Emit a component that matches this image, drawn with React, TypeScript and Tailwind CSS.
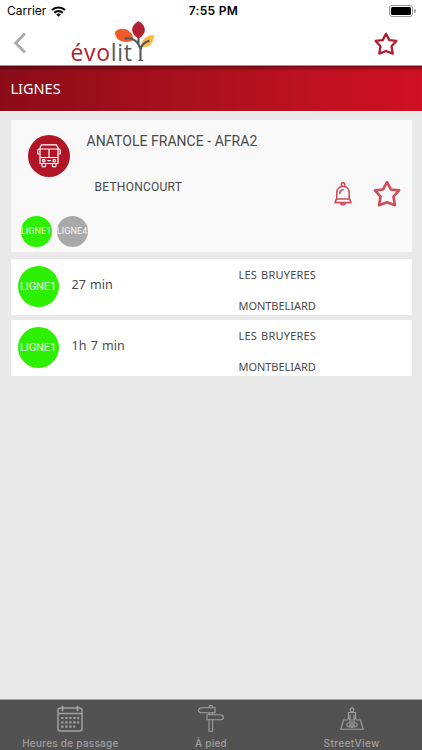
import clsx from "clsx";

const departures = [
  { line: "LIGNE1", wait: "27 min", from: "LES BRUYERES", to: "MONTBELIARD" },
  { line: "LIGNE1", wait: "1h 7 min", from: "LES BRUYERES", to: "MONTBELIARD" },
];

function StarIcon({ className }: { className?: string }) {
  return (
    <svg viewBox="0 0 26 26" fill="none" stroke="currentColor" strokeWidth="2.5" strokeLinejoin="round" className={className}>
      <path d="M13 2 16.6 8.8 24.2 9.7 19 15.4 20.3 23.4 13 20.6 5.7 23.4 7 15.4 1.8 9.7 9.4 8.8Z" />
    </svg>
  );
}

function BackIcon() {
  return (
    <svg viewBox="0 0 14 22" fill="none" stroke="#aaaaaa" strokeWidth="2.8" className="w-[14px] h-[22px]">
      <path d="M12 1.5 2.6 11 12 20.5" />
    </svg>
  );
}

function BellIcon() {
  return (
    <svg viewBox="0 0 18 24" fill="none" stroke="currentColor" strokeWidth="1.6" strokeLinejoin="round" strokeLinecap="round" className="w-[18px] h-6">
      <path d="M7.4 4.4V2.3a1.6 1.6 0 0 1 3.2 0v2.1" />
      <path d="M2.8 17V10.4a6.2 6.2 0 0 1 12.4 0V17" />
      <path d="M2.4 17h13.2l1.4 3.6H1Z" />
      <path d="M6.8 21a2.2 2 0 0 0 4.4 0Z" />
      <path d="M5.8 11.4a3.4 3.4 0 0 1 3.4-3.6" />
    </svg>
  );
}

function BusIcon() {
  return (
    <svg viewBox="0 0 24 24" fill="none" stroke="white" strokeWidth="1.2" strokeLinejoin="round" strokeLinecap="round" className="size-6">
      <path d="M4.5 .8h15L21 3.8v15.7H3V3.8Z" />
      <path d="M3 5h18M3 13.5h18M12 5v8.5" />
      <path d="M3 5H2a1.2 1.2 0 0 0-1.2 1.2V10H2M21 5h1a1.2 1.2 0 0 1 1.2 1.2V10H22" />
      <circle cx="6.8" cy="16.6" r="1.3" />
      <circle cx="17.2" cy="16.6" r="1.3" />
      <path d="M10.5 16.6h3M5 19.5v2.2a1.2 1.2 0 0 0 1.2 1.2h1.2a1.2 1.2 0 0 0 1.2-1.2v-2.2M15.4 19.5v2.2a1.2 1.2 0 0 0 1.2 1.2h1.2a1.2 1.2 0 0 0 1.2-1.2v-2.2" />
    </svg>
  );
}

function CalendarIcon() {
  return (
    <svg viewBox="0 0 26 27" fill="none" stroke="currentColor" strokeWidth="1.5" className="w-[26px] h-[27px]">
      <rect x="1" y="3" width="24" height="23" rx="2.5" />
      <path d="M1 8.5h24" />
      <path d="M5.5 .8v5.5M20.5 .8v5.5" strokeWidth="1.8" />
      <path d="M4.2 13h18M4.2 17.3h18M4.2 21.6h14" strokeWidth="2.2" strokeDasharray="2.3 1.7" />
    </svg>
  );
}

function SignpostIcon() {
  return (
    <svg viewBox="0 0 28 27" fill="none" stroke="currentColor" strokeWidth="1.1" strokeLinejoin="round" className="w-7 h-[27px]">
      <path d="M12 2.8V2.2a1.8 1.8 0 0 1 3.6 0v.6" />
      <path d="M4.5 2.8H18v5H4.5C3 7.8 1.8 6.500 1.5 5.3 1.8 4 3 2.8 4.5 2.8Z" />
      <path d="M10 9.8h13.5c1.5 0 2.7 1.2 3 2.5-.3 1.3-1.5 2.5-3 2.5H10Z" />
      <path d="M12 7.8v2M15.6 7.8v2M12 14.8v11.4h3.6V14.8" />
    </svg>
  );
}

function StreetViewIcon() {
  return (
    <svg viewBox="0 0 24 24" fill="none" stroke="currentColor" strokeWidth="1.1" strokeLinejoin="round" className="size-6">
      <path d="M8 13H3.5L.8 22.3h22.4L20.5 13H16" />
      <circle cx="12" cy="2.8" r="1.9" />
      <path d="M8.5 5.5h7v6.5H14v7h-4v-7H8.5ZM10 7.5V12M14 7.5V12M12 12v6.5" />
      <path d="M9.5 15.5c-1.8.4-2.7 1.1-2.7 2 0 1.6 2.3 2.7 5.2 2.7s5.2-1.1 5.2-2.7c0-.9-.9-1.6-2.7-2" />
    </svg>
  );
}

function Logo() {
  return (
    <div className="relative w-[84px] h-[42px]">
      <div className="absolute left-[-0.5px] top-[17px] font-['Open_Sans'] text-[23px] leading-[28px] tracking-[0.7px] font-medium text-[#b51f33]">
        évo<span className="text-[#58595b]">lit</span>
      </div>
      <svg viewBox="0 0 84 42" fill="none" className="absolute inset-0 w-[84px] h-[42px]">
        <path d="M44 11C47 7 54 7 58 10c3 2 4 5 4.500 9-3 2-7 2.500-11 1.500C46 19 44 15 44 11Z" fill="#f15a29" />
        <path d="M67.500 0C76 5 76 13 67.500 17.500 59 13 59 5 67.500 0Z" fill="#b51f33" />
        <path d="M83 14C83 22 78 27 70.500 26 70 19 75 14 83 14Z" fill="#fbb940" />
        <path d="M53.500 17.500C61 16 67 20 69.500 28V39.500M69.500 29C70 24 74 21 78.500 19.500M67.500 17V23" stroke="#58595b" strokeWidth="2.1" />
        <path d="M67.500 39.500h4.500" stroke="#58595b" strokeWidth="1.2" />
      </svg>
    </div>
  );
}

function LineBadge({ label, color, small }: { label: string; color: string; small?: boolean }) {
  return (
    <div
      className={clsx(
        "flex shrink-0 items-center justify-center rounded-full font-['Roboto'] text-white/90 whitespace-nowrap",
        small ? "size-[31px] pt-px text-[9px] tracking-[0.1px]" : "size-[41px] pt-px text-[11px] tracking-[-0.1px]",
        color
      )}
    >
      {label}
    </div>
  );
}

export default function App() {
  return (
    <div className="w-full h-[750px] flex flex-col overflow-hidden bg-[#e9e9e9] font-['Roboto',sans-serif] text-[#4a4a4a]">
      {/* status bar */}
      <div className="h-[22px] shrink-0 grid grid-cols-3 items-center bg-white pl-[7px] pr-[6px] font-['Inter'] text-black">
        <div className="flex items-center gap-[5px] text-[12px]">
          Carrier
          <svg viewBox="0 0 16 11" className="w-[15px] h-[11px]" fill="none" stroke="black" strokeWidth="2.2">
            <path d="M1 4a10 10 0 0 1 14 0M3.6 6.9a6.3 6.3 0 0 1 8.8 0" />
            <path d="M8 11 5.6 8.8a3.4 3.4 0 0 1 4.8 0Z" fill="black" stroke="none" />
          </svg>
        </div>
        <div className="pl-[4px] text-center text-[12px] font-semibold tracking-[0.3px]">7:55 PM</div>
        <div className="flex items-center justify-end gap-px">
          <div className="w-6 h-[12px] rounded-[3px] border border-[#999] p-px">
            <div className="h-full rounded-[1.5px] bg-black" />
          </div>
          <div className="w-[1.5px] h-1 rounded-r bg-[#999]" />
        </div>
      </div>

      {/* header */}
      <div className="h-[43px] shrink-0 flex justify-between bg-white">
        <div className="flex">
          <div className="ml-[12.5px] mt-[10px]">
            <BackIcon />
          </div>
          <div className="ml-[44.5px] -mt-[1px]">
            <Logo />
          </div>
        </div>
        <StarIcon className="size-6 mt-[9.5px] mr-6 text-[#b01c30]" />
      </div>

      {/* title */}
      <div className="h-[46px] shrink-0 border-t border-[#c98088] bg-linear-to-r from-[#8b0c18] via-[#ad111e] to-[#d01024]">
        <div className="h-full flex items-center pl-[10.5px] bg-linear-to-b from-black/35 to-transparent to-12% font-['Noto_Sans'] text-[14.5px] text-white">
          LIGNES
        </div>
      </div>

      <div className="flex-1 px-[10.5px] pt-[8px] border-t border-[#f6f0f0]">
        {/* stop */}
        <div className="h-[132px] flex flex-col justify-between bg-[#f9f9f9] pl-[10px] pr-[11px] pb-[5px]">
          <div className="flex">
            <div className="size-[42px] ml-[7px] mt-[15px] flex items-center justify-center rounded-full bg-[#b01425]">
              <BusIcon />
            </div>
            <div className="ml-[17px] pt-[12px]">
              <div className="text-[14px] leading-[18px] tracking-[0.03px]">ANATOLE FRANCE - AFRA2</div>
              <div className="mt-[28px] ml-2 text-[12px] leading-[18px] tracking-[0.25px]">BETHONCOURT</div>
            </div>
            <div className="ml-auto mt-[60px] flex items-center gap-[21px] text-[#cf4e5b]">
              <BellIcon />
              <StarIcon className="size-[28px]" />
            </div>
          </div>
          <div className="flex gap-[5px]">
            <LineBadge label="LIGNE1" color="bg-[#2cf000]" small />
            <LineBadge label="LIGNE4" color="bg-[#a9a9a9]" small />
          </div>
        </div>

        {/* next departures */}
        <div className="mt-[7px] flex flex-col gap-[5px]">
          {departures.map((departure, index) => (
            <div key={index} className="h-[56px] flex bg-white pl-[7px] pt-[7px]">
              <LineBadge label={departure.line} color="bg-[#2cf000]" />
              <div className="w-[180px] pl-[13px] pt-[10px] font-['Noto_Sans'] text-[12.5px] leading-[18px] [word-spacing:1px]">{departure.wait}</div>
              <div className="font-['Noto_Sans'] text-[11px] leading-[18px]">
                <div className="tracking-[0.2px] [word-spacing:1px]">{departure.from}</div>
                <div className="mt-[12.5px] tracking-[-0.05px]">{departure.to}</div>
              </div>
            </div>
          ))}
        </div>
      </div>

      {/* tab bar */}
      <div className="h-[51px] shrink-0 grid grid-cols-3 border-t border-[#a0a0a0] bg-[#525252] font-['Inter'] text-[10px] font-medium tracking-[0.25px] text-[#a0a0a0]">
        <div className="flex flex-col items-center pt-[5px]">
          <CalendarIcon />
          <div className="mt-[5px] leading-[13px]">Heures de passage</div>
        </div>
        <div className="flex flex-col items-center pt-[5px]">
          <SignpostIcon />
          <div className="mt-[5px] leading-[13px]">À pied</div>
        </div>
        <div className="flex flex-col items-center pt-[7px]">
          <StreetViewIcon />
          <div className="mt-[6px] leading-[13px] tracking-[0.4px]">StreetView</div>
        </div>
      </div>
    </div>
  );
}
